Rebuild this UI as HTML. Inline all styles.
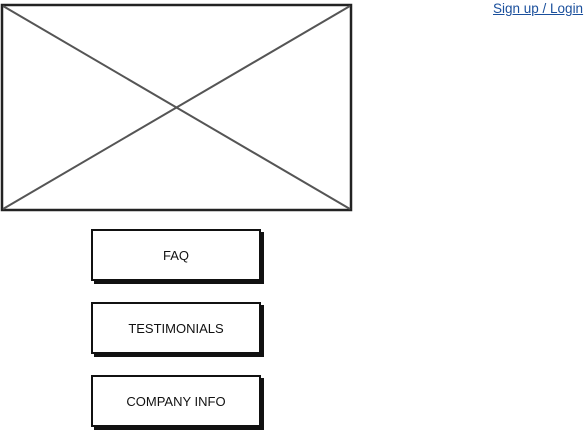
<!DOCTYPE html>
<html><head><style>
body{margin:0;width:584px;height:431px;background:#fff;position:relative;overflow:hidden;font-family:"Liberation Sans",sans-serif;}
.b{position:absolute;left:91px;width:166px;height:48px;border:2px solid #111;background:#fff;box-shadow:3px 3px 0 #111;font-size:13px;color:#111;display:flex;align-items:center;justify-content:center;}
a{position:absolute;left:493px;top:1px;font-size:13.5px;color:#1a4f9c;text-decoration:underline;}
</style></head><body>
<svg style="position:absolute;left:0;top:0" width="360" height="220">
<rect x="2" y="5" width="349" height="205" fill="#fff" stroke="#222" stroke-width="2.5"/>
<line x1="3" y1="6" x2="350" y2="209" stroke="#555" stroke-width="2"/>
<line x1="3" y1="209" x2="350" y2="6" stroke="#555" stroke-width="2"/>
</svg>
<a>Sign up / Login</a>
<div class="b" style="top:229px">FAQ</div>
<div class="b" style="top:302px">TESTIMONIALS</div>
<div class="b" style="top:375px">COMPANY INFO</div>
</body></html>
